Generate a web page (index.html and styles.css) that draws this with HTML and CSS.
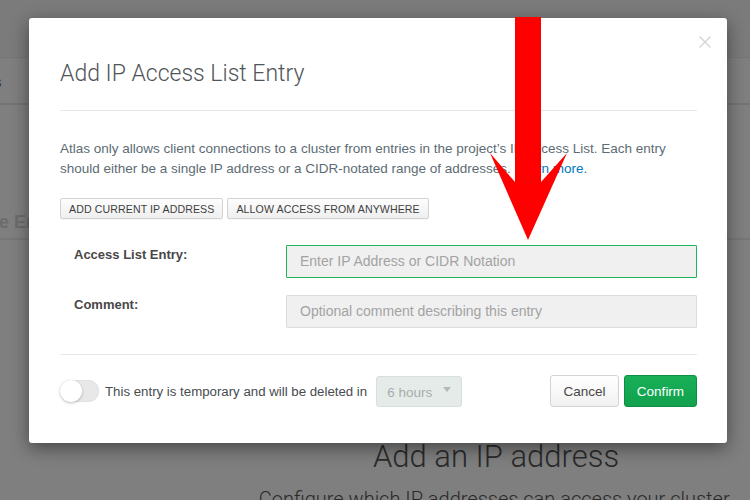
FILE: index.html
```html
<!DOCTYPE html>
<html lang="en">
<head>
<meta charset="utf-8">
<title>Add IP Access List Entry</title>
<link rel="stylesheet" href="styles.css">
</head>
<body>
<div class="page">
  <div class="topnav"></div>
  <div class="subnav"><span class="subnav-text">Tabs</span></div>
  <div class="section">
    <div class="section-title">Range Entries</div>
  </div>
  <div class="empty">
    <div class="empty-title">Add an IP address</div>
    <div class="empty-text">Configure which IP addresses can access your cluster.</div>
  </div>
</div>

<div class="modal">
  <button class="close" aria-label="Close">
    <svg width="12" height="12" viewBox="0 0 12 12"><path d="M0.5 0.5 L11.5 11.5 M11.5 0.5 L0.5 11.5" stroke="#d3d3d3" stroke-width="1.4" fill="none"/></svg>
  </button>
  <div class="modal-header">
    <h1 class="modal-title">Add IP Access List Entry</h1>
  </div>
  <div class="modal-body">
    <p class="intro">Atlas only allows client connections to a cluster from entries in the project’s IP Access List. Each entry should either be a single IP address or a CIDR-notated range of addresses. <a href="#" class="link">Learn more.</a></p>
    <div class="quick-btns">
      <button class="btn-small">ADD CURRENT IP ADDRESS</button>
      <button class="btn-small">ALLOW ACCESS FROM ANYWHERE</button>
    </div>
    <div class="form-row">
      <label class="form-label">Access List Entry:</label>
      <div class="input input-focus">Enter IP Address or CIDR Notation</div>
    </div>
    <div class="form-row form-row-2">
      <label class="form-label">Comment:</label>
      <div class="input">Optional comment describing this entry</div>
    </div>
  </div>
  <div class="modal-footer">
    <span class="toggle"><span class="knob"></span></span>
    <span class="footer-text">This entry is temporary and will be deleted in</span>
    <span class="select">6 hours <span class="caret"></span></span>
    <div class="footer-actions">
      <button class="btn btn-cancel">Cancel</button>
      <button class="btn btn-confirm">Confirm</button>
    </div>
  </div>
</div>

<svg class="arrow" width="750" height="500" viewBox="0 0 750 500">
  <polygon points="515,17 541,17 541,182 567,153 528,240 490,153 515,182" fill="#ff0000"/>
</svg>
</body>
</html>
```

FILE: styles.css
```css
* { box-sizing: border-box; }

html, body {
  margin: 0;
  padding: 0;
}

body {
  width: 750px;
  height: 500px;
  overflow: hidden;
  position: relative;
  background: #7f7f7f;
  font-family: "Liberation Sans", Arial, sans-serif;
}

/* dimmed background page */
.page {
  width: 750px;
  height: 500px;
}

.topnav {
  height: 58px;
  background: #7b7b7b;
  border-bottom: 1px solid #767676;
}

.subnav {
  height: 47px;
  border-bottom: 2px solid #747474;
  display: flex;
  align-items: center;
  overflow: hidden;
}

.subnav-text {
  font-size: 14px;
  color: #3a3a3a;
  text-indent: -28px;
  display: block;
  padding-top: 2px;
}

.section {
  height: 135px;
  border-bottom: 2px solid #767676;
  overflow: hidden;
  display: flex;
  align-items: flex-end;
  padding-bottom: 5px;
}

.section-title {
  font-size: 18px;
  font-weight: bold;
  color: #6c6c6c;
  white-space: nowrap;
  margin-left: -46px;
}

.empty {
  display: flex;
  flex-direction: column;
  align-items: center;
  padding-left: 242px;
  padding-top: 199px;
}

.empty-title {
  font-family: Roboto, "Liberation Sans", sans-serif;
  font-weight: 300;
  font-size: 31px;
  color: #2a2a2a;
  line-height: 36px;
}

.empty-text {
  font-family: Roboto, "Liberation Sans", sans-serif;
  font-weight: 300;
  font-size: 20px;
  color: #2a2a2a;
  margin-top: 12px;
  white-space: nowrap;
}

/* modal */
.modal {
  position: absolute;
  left: 29px;
  top: 18px;
  width: 698px;
  height: 425px;
  background: #fff;
  border-radius: 3px;
  box-shadow: 0 5px 18px rgba(0, 0, 0, 0.45);
  padding: 0 30px 0 31px;
}

.close {
  position: absolute;
  right: 16px;
  top: 18px;
  width: 12px;
  height: 12px;
  padding: 0;
  border: 0;
  background: none;
  display: block;
}

.close svg { display: block; }

.modal-header {
  padding-top: 40px;
  padding-bottom: 20px;
  border-bottom: 1px solid #e7e7e7;
}

.modal-title {
  margin: 0;
  font-family: Roboto, "Liberation Sans", sans-serif;
  font-weight: 300;
  font-size: 23px;
  line-height: 32px;
  color: #4f5558;
}

.modal-body {
  padding-top: 28px;
  padding-bottom: 26px;
  border-bottom: 1px solid #e7e7e7;
}

.intro {
  margin: 0;
  font-size: 13.5px;
  line-height: 20px;
  color: #5d6c74;
}

.link {
  color: #0079c1;
  text-decoration: none;
}

.quick-btns {
  display: flex;
  gap: 4px;
  margin-top: 19px;
}

.btn-small {
  font-family: "Liberation Sans", Arial, sans-serif;
  font-size: 10.6px;
  height: 21px;
  padding: 0 8px;
  color: #3f3f3f;
  background: linear-gradient(#fdfdfd, #efefef);
  border: 1px solid #d3d3d3;
  border-radius: 2px;
  letter-spacing: 0.1px;
  box-shadow: 0 1px 0 rgba(0,0,0,0.04);
}

.form-row {
  display: flex;
  margin-top: 26px;
}

.form-row-2 { margin-top: 17px; }

.form-label {
  width: 226px;
  padding-left: 14px;
  font-size: 13px;
  font-weight: bold;
  line-height: 20px;
  color: #494747;
}

.input {
  flex: 1;
  height: 33px;
  background: #f0f0f0;
  border: 1px solid #dcdcdc;
  border-radius: 1px;
  padding: 0 13px;
  font-size: 14px;
  line-height: 31px;
  color: #a3a3a3;
}

.input-focus {
  border-color: #1fb459;
}

.modal-footer {
  display: flex;
  align-items: center;
  padding-top: 20px;
}

.toggle {
  width: 39px;
  height: 22px;
  border-radius: 11px;
  background: #e8e8e8;
  box-shadow: inset 0 0 0 1px #e2e2e2;
  display: flex;
  align-items: center;
}

.knob {
  width: 22px;
  height: 22px;
  border-radius: 50%;
  background: #fff;
  box-shadow: 0 1px 3px rgba(0,0,0,0.25);
}

.footer-text {
  margin-left: 6px;
  font-size: 13.25px;
  color: #464c4f;
}

.select {
  margin-left: 9px;
  width: 86px;
  height: 31px;
  background: #e5ebe9;
  border: 1px solid #d8dfdc;
  border-radius: 3px;
  display: flex;
  align-items: center;
  padding-left: 10px;
  padding-top: 2px;
  font-size: 13.5px;
  color: #a6adab;
  position: relative;
}

.caret {
  position: absolute;
  right: 10px;
  top: 10px;
  width: 0;
  height: 0;
  border-left: 4px solid transparent;
  border-right: 4px solid transparent;
  border-top: 5px solid #b3b9b7;
}

.footer-actions {
  margin-left: auto;
  display: flex;
  gap: 5px;
}

.btn {
  height: 32px;
  font-family: "Liberation Sans", Arial, sans-serif;
  font-size: 13.5px;
  border-radius: 3px;
  padding: 0 10px;
}

.btn-cancel {
  width: 69px;
  color: #494747;
  background: linear-gradient(#ffffff, #f1f1f1);
  border: 1px solid #d4d4d4;
}

.btn-confirm {
  width: 73px;
  color: #fff;
  background: linear-gradient(#17b057, #12a14e);
  border: 1px solid #0e8d44;
}

.arrow {
  position: absolute;
  left: 0;
  top: 0;
  pointer-events: none;
}
```
